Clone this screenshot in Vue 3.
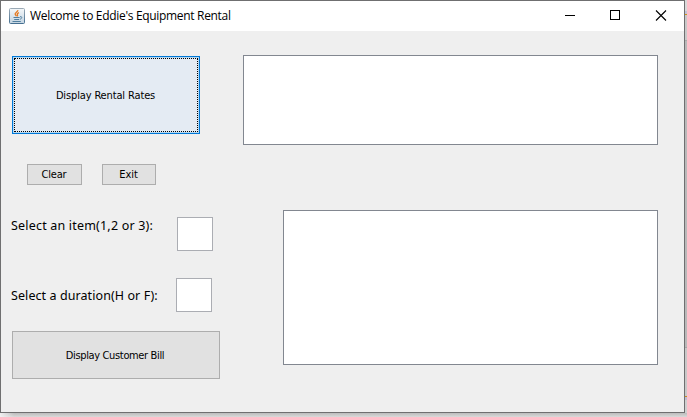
<script setup>
import { ref } from 'vue'

const item = ref('')
const duration = ref('')
const rates = ref('')
const bill = ref('')

function clearAll() {
  item.value = ''
  duration.value = ''
  rates.value = ''
  bill.value = ''
}
</script>

<template>
  <div class="desktop">
    <div class="window">
      <header class="titlebar">
        <svg class="java" width="16" height="16" viewBox="0 0 16 16">
          <defs>
            <linearGradient id="tile" x1="0" y1="0" x2="0" y2="1">
              <stop offset="0" stop-color="#f4f7f9" />
              <stop offset="1" stop-color="#c3d4e1" />
            </linearGradient>
            <linearGradient id="rim" x1="0" y1="0" x2="0" y2="1">
              <stop offset="0" stop-color="#9aa9b5" />
              <stop offset="1" stop-color="#456f91" />
            </linearGradient>
          </defs>
          <rect x="0.5" y="0.5" width="15" height="15" rx="1" fill="url(#tile)" stroke="url(#rim)" />
          <path d="M8.8 2.2C9.3 4 5.4 4.6 6.2 6.3C6.5 7 7.3 7.3 7.2 8.2M10 4.6C8 5.3 8.1 6 8.5 6.7C8.8 7.3 8.6 7.8 8 8.3" fill="none" stroke="#e6791f" stroke-width="1.3" />
          <path d="M4.5 9.5H10.6M5.2 11.5H10M3.5 13.5H11.8M11 8.7C13.7 8.3 13.2 10.7 10.8 11.3" fill="none" stroke="#527f9f" stroke-width="1" />
        </svg>
        <span class="title">Welcome to Eddie's Equipment Rental</span>
        <svg class="controls" width="103" height="11" viewBox="0 0 103 11" fill="none" stroke="#000">
          <path d="M0 5.5H10" />
          <rect x="45.5" y="0.5" width="9" height="9" />
          <path d="M91 0.5L101 10.5M101 0.5L91 10.5" stroke-width="1.1" />
        </svg>
      </header>
      <main class="body">
        <section class="left">
          <button class="btn rates"><span class="focus"><span class="t-rates">Display Rental Rates</span></span></button>
          <div class="small-row">
            <button class="btn clear" @click="clearAll">Clear</button>
            <button class="btn exit">Exit</button>
          </div>
          <div class="row item">
            <label for="item">Select an item(1,2 or 3):</label>
            <input id="item" v-model="item" />
          </div>
          <div class="row duration">
            <label for="duration">Select a duration(H or F):</label>
            <input id="duration" v-model="duration" />
          </div>
          <button class="btn bill"><span class="t-bill">Display Customer Bill</span></button>
        </section>
        <section class="right">
          <textarea v-model="rates" class="out-rates"></textarea>
          <textarea v-model="bill" class="out-bill"></textarea>
        </section>
      </main>
    </div>
    <div class="behind"></div>
    <div class="below"></div>
  </div>
</template>

<style>
body {
  margin: 0;
  overflow: hidden;
}
</style>

<style scoped>
* {
  box-sizing: border-box;
}
.desktop {
  width: 687px;
  height: 417px;
  display: grid;
  grid-template-columns: 685px 2px;
  grid-template-rows: 413px 4px;
  overflow: hidden;
  background: #d6d6d6;
}
.window {
  border: 1px solid #6f6f70;
  background: #efefef;
  display: flex;
  flex-direction: column;
}
.behind {
  background: linear-gradient(#d9d9d9 0 11px, #c2c2d5 11px 14px, #d4941c 14px 15px, #c9c9c9 15px 40px, #aaaaaa 40px 41px, #b9b9b9 41px 347px, #a7a7a7 347px 348px, #c8c8c8 348px 396px, #c98c1c 396px 397px, #bdbdd0 397px 400px, #cfcfcf 400px);
}
.below {
  grid-column: 1 / 3;
  background: linear-gradient(90deg, #f0f0f0 0, rgba(240, 240, 240, 0) 14px), linear-gradient(#bcbcbc, #d9d9d9);
}
.titlebar {
  height: 30px;
  flex: none;
  background: #fff;
  display: flex;
  align-items: center;
  padding: 0 16px 0 8px;
}
.java {
  margin-right: 5px;
}
.title {
  font: 12px/16px "Open Sans", "Noto Sans", sans-serif;
  color: #000;
  white-space: nowrap;
  letter-spacing: -0.32px;
}
.controls {
  margin-left: auto;
  margin-top: -1px;
}
.body {
  flex: 1;
  display: flex;
  justify-content: space-between;
  padding: 24px 26px 0 10px;
}
.left {
  display: flex;
  flex-direction: column;
  align-items: flex-start;
  padding-top: 1px;
}
.btn {
  font: 11px/14px "DejaVu Sans Condensed", "DejaVu Sans", sans-serif;
  letter-spacing: -0.35px;
  color: #000;
  background: #e1e1e1;
  border: 1px solid #adadad;
  padding: 0;
  border-radius: 0;
  white-space: nowrap;
  outline: none;
}
.rates {
  width: 188px;
  height: 78px;
  margin-left: 1px;
  border-color: #0078d7;
  background: #e4ebf3;
  box-shadow: inset 0 0 0 1px #b5d8f2;
  padding: 1px;
  letter-spacing: -0.14px;
}
.focus {
  width: 100%;
  height: 100%;
  display: flex;
  align-items: center;
  justify-content: center;
  padding: 2px 1px 0 0;
  border: 1px dotted #000;
}
.small-row {
  display: flex;
  gap: 20px;
  margin: 30px 0 0 16px;
}
.clear {
  width: 55px;
  height: 21px;
  padding-right: 1px;
  letter-spacing: -0.2px;
}
.exit {
  width: 54px;
  height: 21px;
  padding-right: 1px;
  letter-spacing: 0;
}
.row {
  display: flex;
  align-items: flex-start;
}
.row label {
  font: 12.5px/16px "Noto Sans", "DejaVu Sans", sans-serif;
  letter-spacing: 0.08px;
  white-space: nowrap;
}
.row input {
  width: 36px;
  height: 34px;
  border: 1px solid #abadb3;
  border-radius: 0;
  background: #fff;
  padding: 2px;
  outline: none;
}
.item {
  margin-top: 32px;
}
.item label {
  width: 166px;
  padding-top: 1px;
  letter-spacing: 0.19px;
}
.duration {
  margin-top: 27px;
}
.duration label {
  width: 165px;
  padding-top: 10px;
}
.bill {
  width: 208px;
  height: 48px;
  margin: 19px 0 0 1px;
  padding: 2px 2px 0 0;
}
.right {
  display: flex;
  flex-direction: column;
  align-items: flex-end;
  gap: 65px;
}
.right textarea {
  display: block;
  resize: none;
  border: 1px solid #828790;
  border-radius: 0;
  background: #fff;
  outline: none;
}
.out-rates {
  width: 415px;
  height: 90px;
}
.out-bill {
  width: 375px;
  height: 155px;
}
</style>
